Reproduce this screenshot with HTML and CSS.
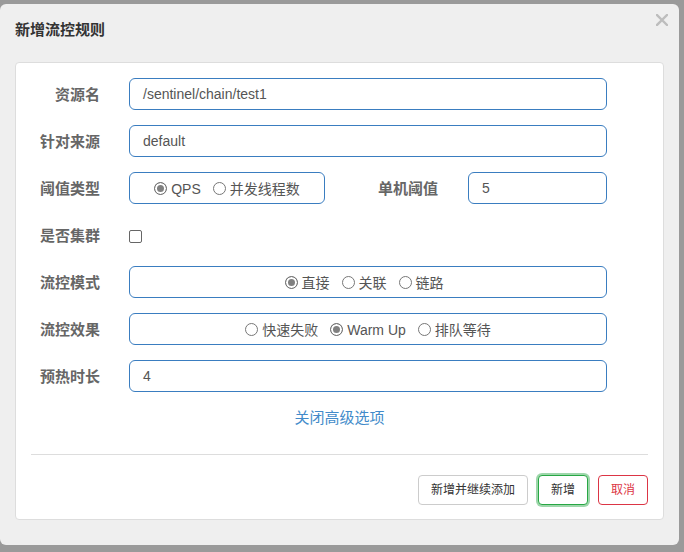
FILE: index.html
```html
<!DOCTYPE html>
<html lang="zh-CN">
<head>
<meta charset="utf-8">
<title>新增流控规则</title>
<link rel="stylesheet" href="styles.css">
</head>
<body>
<div class="modal">
  <div class="modal-header">
    <h4 class="modal-title">新增流控规则</h4>
    <span class="close" aria-label="关闭">
      <svg width="12" height="12" viewBox="0 0 12 12"><path d="M1 1 L11 11 M11 1 L1 11" stroke="#bdbdbd" stroke-width="2.4" stroke-linecap="square"/></svg>
    </span>
  </div>
  <div class="panel">
    <div class="form">
      <div class="row">
        <label class="lbl">资源名</label>
        <div class="ctl input full">/sentinel/chain/test1</div>
      </div>
      <div class="row">
        <label class="lbl">针对来源</label>
        <div class="ctl input full">default</div>
      </div>
      <div class="row">
        <label class="lbl">阈值类型</label>
        <div class="ctl group narrow">
          <span class="opt"><span class="radio checked"></span>QPS</span>
          <span class="opt"><span class="radio"></span>并发线程数</span>
        </div>
        <label class="lbl lbl2">单机阈值</label>
        <div class="ctl input small">5</div>
      </div>
      <div class="row">
        <label class="lbl">是否集群</label>
        <span class="checkbox"></span>
      </div>
      <div class="row">
        <label class="lbl">流控模式</label>
        <div class="ctl group full wide">
          <span class="opt"><span class="radio checked"></span>直接</span>
          <span class="opt"><span class="radio"></span>关联</span>
          <span class="opt"><span class="radio"></span>链路</span>
        </div>
      </div>
      <div class="row">
        <label class="lbl">流控效果</label>
        <div class="ctl group full">
          <span class="opt"><span class="radio"></span>快速失败</span>
          <span class="opt"><span class="radio checked"></span>Warm Up</span>
          <span class="opt"><span class="radio"></span>排队等待</span>
        </div>
      </div>
      <div class="row">
        <label class="lbl">预热时长</label>
        <div class="ctl input full">4</div>
      </div>
    </div>
    <div class="toggle"><a class="link">关闭高级选项</a></div>
    <div class="divider"></div>
    <div class="footer">
      <button class="btn btn-default">新增并继续添加</button>
      <button class="btn btn-ok">新增</button>
      <button class="btn btn-cancel">取消</button>
    </div>
  </div>
</div>
</body>
</html>
```

FILE: styles.css
```css
* { box-sizing: border-box; }
html, body {
  margin: 0;
  padding: 0;
  background: #9a9a9a;
  font-family: "Liberation Sans", "Noto Sans CJK SC", sans-serif;
  color: #555;
}
body {
  padding-top: 4px;
  height: 552px;
  overflow: hidden;
}
.modal {
  width: 679px;
  height: 541px;
  background: #efefef;
  border-radius: 6px;
  padding: 0 15px 25px 15px;
}
.modal-header {
  height: 58px;
  display: flex;
  justify-content: space-between;
  align-items: flex-start;
}
.modal-title {
  margin: 15px 0 0 0;
  font-size: 15px;
  line-height: 22px;
  font-weight: bold;
  color: #333;
}
.close {
  display: block;
  margin: 10px -4px 0 0;
  line-height: 0;
}
.panel {
  background: #fff;
  border: 1px solid #ddd;
  border-radius: 4px;
  padding: 15px 15px 14px 0;
  height: 458px;
}
.form {
  display: flex;
  flex-direction: column;
  gap: 15px;
}
.row {
  display: flex;
  align-items: center;
  height: 32px;
}
.lbl {
  width: 84px;
  flex: none;
  text-align: right;
  font-size: 15px;
  font-weight: bold;
  color: #666;
  margin-right: 29px;
  line-height: 20px;
  padding-top: 2px;
}
.lbl2 {
  width: 113px;
  margin-right: 30px;
}
.ctl {
  height: 32px;
  border: 1px solid #3a7dc0;
  border-radius: 6px;
  font-size: 14px;
  line-height: 30px;
}
.input {
  padding: 0 13px;
  color: #555;
}
.full { width: 478px; }
.narrow { width: 196px; }
.small { width: 139px; }
.group {
  display: flex;
  justify-content: center;
  align-items: center;
  gap: 12px;
  color: #555;
  padding-top: 1px;
}
.group.wide { padding-right: 8px; }
.opt {
  display: inline-flex;
  align-items: center;
  gap: 4px;
}
.radio {
  display: inline-block;
  width: 13px;
  height: 13px;
  border: 1px solid #777;
  border-radius: 50%;
  background: #fff;
}
.radio.checked {
  background: #808080;
  box-shadow: inset 0 0 0 2px #fff;
  border-color: #707070;
}
.checkbox {
  display: inline-block;
  width: 13px;
  height: 13px;
  border: 1px solid #666;
  border-radius: 2px;
  background: #fff;
  margin-top: 2px;
}
.toggle {
  margin-top: 15px;
  text-align: center;
  line-height: 22px;
  padding-left: 15px;
}
.link {
  font-size: 15px;
  color: #428bca;
  text-decoration: none;
}
.divider {
  margin: 25px 0 0 15px;
  height: 1px;
  background: #ddd;
}
.footer {
  margin-top: 20px;
  display: flex;
  justify-content: flex-end;
  gap: 10px;
}
.btn {
  height: 30px;
  padding: 0 12px;
  font-family: "Liberation Sans", "Noto Sans CJK SC", sans-serif;
  font-size: 12px;
  line-height: 28px;
  background: #fff;
  border: 1px solid #ccc;
  border-radius: 4px;
  color: #333;
}
.btn-ok {
  border-color: #28a745;
  box-shadow: 0 0 0 2px rgba(40, 167, 69, 0.45);
  color: #333;
}
.btn-cancel {
  border-color: #dc3545;
  color: #dc3545;
}
```
